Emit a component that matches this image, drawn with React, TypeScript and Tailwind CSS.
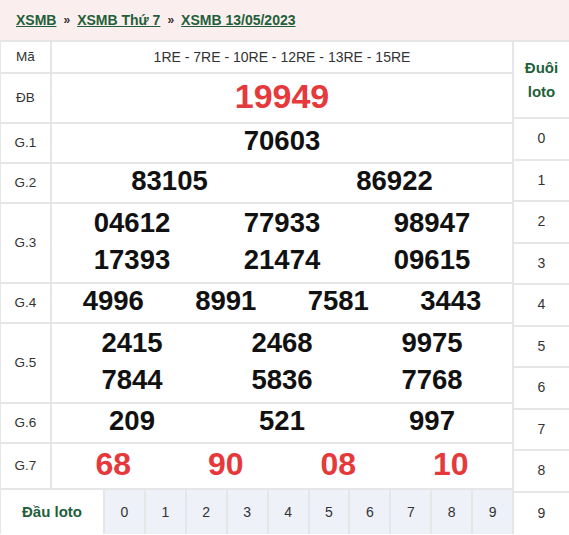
const B = "border-[#e6e6e6]";

type Row = { label: string; h: string; lines: string[][]; red?: boolean; big?: boolean };

const rows: Row[] = [
  { label: "ĐB", h: "h-[50px]", lines: [["19949"]], red: true, big: true },
  { label: "G.1", h: "h-[40px]", lines: [["70603"]] },
  { label: "G.2", h: "h-[40px]", lines: [["83105", "86922"]] },
  { label: "G.3", h: "h-[80px]", lines: [["04612", "77933", "98947"], ["17393", "21474", "09615"]] },
  { label: "G.4", h: "h-[40px]", lines: [["4996", "8991", "7581", "3443"]] },
  { label: "G.5", h: "h-[80px]", lines: [["2415", "2468", "9975"], ["7844", "5836", "7768"]] },
  { label: "G.6", h: "h-[40px]", lines: [["209", "521", "997"]] },
  { label: "G.7", h: "h-[46px]", lines: [["68", "90", "08", "10"]], red: true },
];

export default function App() {
  return (
    <div className="w-[569px] h-[535px] bg-white text-[#222]" style={{ fontFamily: "Arial, 'Liberation Sans', sans-serif" }}>
      <div className="h-[40px] bg-[#fbeeee] flex items-center pl-[16px] text-[14px] font-bold text-[#1f5f3a]">
        <a className="underline">XSMB</a>
        <span className="mx-[7px] text-[#333] text-[12px]">»</span>
        <a className="underline">XSMB Thứ 7</a>
        <span className="mx-[7px] text-[#333] text-[12px]">»</span>
        <a className="underline">XSMB 13/05/2023</a>
      </div>

      <div className={`flex border-t-2 border-l ${B}`}>
        <div className={`w-[513px] border-r-2 ${B}`}>
          <div className={`flex h-[32px] border-b-2 ${B} text-[#333]`}>
            <div className={`w-[51px] border-r-2 ${B} flex items-center justify-center text-[13.5px]`}>Mã</div>
            <div className="flex-1 flex items-center justify-center text-[14px]">1RE - 7RE - 10RE - 12RE - 13RE - 15RE</div>
          </div>
          {rows.map((r) => (
            <div key={r.label} className={`flex ${r.h} border-b-2 ${B}`}>
              <div className={`w-[51px] border-r-2 ${B} flex items-center justify-center text-[13.5px] text-[#333]`}>{r.label}</div>
              <div className="flex-1 flex flex-col justify-center px-[5px] pb-[4px]">
                {r.lines.map((line, i) => (
                  <div key={i} className="flex h-[39px] items-center">
                    {line.map((n, j) => (
                      <span
                        key={j}
                        className={`flex-1 text-center font-bold leading-none ${
                          r.big ? "text-[34px]" : r.red ? "text-[32px]" : "text-[27.5px]"
                        } ${r.red ? "text-[#e5393b]" : "text-[#111]"}`}
                      >
                        {n}
                      </span>
                    ))}
                  </div>
                ))}
              </div>
            </div>
          ))}
          <div className="flex h-[44px]">
            <div className={`w-[104px] border-r-2 ${B} flex items-center justify-center text-[15px] font-bold text-[#1f5f3a]`}>Đầu loto</div>
            {Array.from({ length: 10 }, (_, i) => (
              <div
                key={i}
                className={`flex-1 bg-[#eef1f8] flex items-center justify-center text-[14px] text-[#333] ${i < 9 ? `border-r-2 ${B}` : ""}`}
              >
                {i}
              </div>
            ))}
          </div>
        </div>

        <div className="flex-1 flex flex-col">
          <div className={`h-[77px] border-b-2 ${B} flex items-center justify-center text-center text-[15px] font-bold text-[#1f5f3a] leading-[24px]`}>
            Đuôi
            <br />
            loto
          </div>
          {Array.from({ length: 10 }, (_, i) => (
            <div
              key={i}
              className={`h-[41.5px] flex items-center justify-center text-[14px] text-[#333] ${i < 9 ? `border-b-2 ${B}` : ""}`}
            >
              {i}
            </div>
          ))}
        </div>
      </div>
    </div>
  );
}
